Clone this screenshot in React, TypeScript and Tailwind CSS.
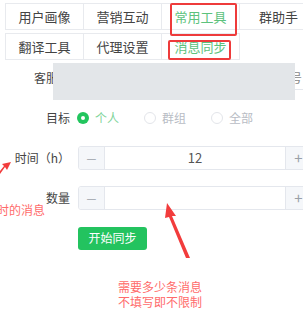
import { useState } from "react";

const FONT = { fontFamily: '"Noto Sans CJK SC", "Noto Sans", sans-serif' };

const ROW1 = ["用户画像", "营销互动", "常用工具", "群助手"];
const ROW2 = ["翻译工具", "代理设置", "消息同步"];

function Tab({ label, active }: { label: string; active?: boolean }) {
  return (
    <div
      className={`flex h-full w-[78px] shrink-0 items-center justify-center border-r border-[#e8eaee] text-[13px] ${
        active ? "text-[#5cc27c]" : "text-[#444]"
      }`}
    >
      {label}
    </div>
  );
}

function Radio({ label, checked }: { label: string; checked?: boolean }) {
  return (
    <label className="flex items-center gap-[6px]">
      <span
        className={`flex h-[12px] w-[12px] items-center justify-center rounded-full ${
          checked ? "bg-[#22c55e]" : "border border-[#e3e5ea] bg-white"
        }`}
      >
        {checked && <span className="h-[4px] w-[4px] rounded-full bg-white" />}
      </span>
      <span className={`text-[12px] ${checked ? "text-[#7fd49a]" : "text-[#b8bcc4]"}`}>
        {label}
      </span>
    </label>
  );
}

function NumberInput({ value }: { value: string }) {
  return (
    <div className="flex h-[24px] w-[234px] shrink-0 overflow-hidden rounded-[3px] border border-[#e4e7ed] bg-white">
      <div className="flex w-[26px] items-center justify-center border-r border-[#e4e7ed] bg-[#f5f7fa] text-[11px] text-[#9aa0a8]">
        —
      </div>
      <div className="flex flex-1 items-center justify-center text-[13px] text-[#555]">{value}</div>
      <div className="flex w-[26px] items-center justify-center border-l border-[#e4e7ed] bg-[#f5f7fa] text-[15px] text-[#9aa0a8]">
        +
      </div>
    </div>
  );
}

function Row({ label, children }: { label: string; children: React.ReactNode }) {
  return (
    <div className="flex h-[24px] items-center">
      <div className="w-[70px] shrink-0 text-right text-[12px] text-[#444]">{label}</div>
      <div className="ml-[8px] flex items-center">{children}</div>
    </div>
  );
}

export default function App() {
  const [target] = useState("个人");

  return (
    <div className="relative h-[326px] w-[303px] overflow-hidden bg-white" style={FONT}>
      <div className="flex flex-col gap-[3px] pl-[5px] pt-[3px]">
        <div className="flex h-[27px] w-[310px] border border-r-0 border-[#e8eaee]">
          {ROW1.map((t) => (
            <Tab key={t} label={t} active={t === "常用工具"} />
          ))}
        </div>
        <div className="flex h-[27px] w-fit border border-r-0 border-[#e8eaee]">
          {ROW2.map((t) => (
            <Tab key={t} label={t} active={t === "消息同步"} />
          ))}
        </div>
      </div>

      <div className="mt-[6px] flex flex-col gap-[16px]">
        <Row label="客服号">
          <div className="flex h-[24px] w-[226px] items-center justify-end border-b border-[#e4e7ed] pr-[2px] text-[12px] text-[#888]">
            号
          </div>
        </Row>
        <Row label="目标">
          <div className="-ml-[1px] flex gap-[25px]">
            {["个人", "群组", "全部"].map((t) => (
              <Radio key={t} label={t} checked={t === target} />
            ))}
          </div>
        </Row>
        <Row label="时间（h）">
          <NumberInput value="12" />
        </Row>
        <Row label="数量">
          <NumberInput value="" />
        </Row>
        <Row label="">
          <button
            type="button"
            className="h-[23px] w-[69px] rounded-[3px] bg-[#23c35f] text-[12px] text-white"
          >
            开始同步
          </button>
        </Row>
      </div>

      {/* redaction */}
      <div className="absolute left-[53px] top-[63px] h-[37px] w-[242px] bg-[#e3e6e9]" />

      {/* annotations */}
      <div className="absolute left-[170px] top-[3px] h-[33px] w-[67px] rounded-[2px] border-2 border-[#ee3b3b]" />
      <div className="absolute left-[168px] top-[40px] h-[20px] w-[63px] rounded-[2px] border-2 border-[#ee3b3b]" />

      <svg className="absolute left-0 top-0" width="303" height="326" viewBox="0 0 303 326">
        <polygon points="167,203 176,216 172,216 190,258 186,258 169,217 165,218" fill="#f23c3c" />
        <polygon points="11,162 7,170 5,167 0,174 0,171 4,166 2,164" fill="#f23c3c" />
      </svg>

      <div className="absolute left-[-3px] top-[203px] text-[12px] leading-[14px] text-[#ff6b6b]">时的消息</div>
      <div className="absolute left-[118px] top-[279px] flex flex-col text-[12px] leading-[15px] text-[#ff6b6b]">
        <span>需要多少条消息</span>
        <span>不填写即不限制</span>
      </div>
    </div>
  );
}
